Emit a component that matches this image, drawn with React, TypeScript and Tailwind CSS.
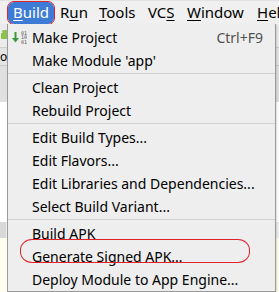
import React from "react";

const Row = ({ children, shortcut }: { children: React.ReactNode; shortcut?: string }) => (
  <div className="flex h-[23px] items-center pl-[24px] pr-[12px] text-[14px] text-black">
    <span className="flex-1 whitespace-nowrap">{children}</span>
    {shortcut && <span className="text-[#505050]">{shortcut}</span>}
  </div>
);

const Sep = () => (
  <div className="flex h-[4px] flex-col justify-start pt-[1px]">
    <div className="h-px bg-[#d2d2d2]" />
  </div>
);

export default function App() {
  return (
    <div
      className="relative h-[292px] w-[279px] overflow-hidden bg-[#f0f0f0]"
      style={{ fontFamily: '"Noto Sans", "Open Sans", sans-serif' }}
    >
      {/* menu bar */}
      <div className="flex h-[24px] items-center border-t border-[#e2e2e2] bg-[#f0f0f0] text-[15px] text-black">
        <div className="relative ml-[8px] flex h-[22px] w-[46px] shrink-0 items-center justify-center rounded-[6px] bg-[#3e7bd6] text-white">
          <span>
            <span className="underline underline-offset-2">B</span>uild
          </span>
          <div className="absolute -inset-[1px] rounded-[7px] border border-[#e0232a]" />
        </div>
        <span className="ml-[6px] w-[39px] shrink-0">
          R<span className="underline underline-offset-2">u</span>n
        </span>
        <span className="w-[49px] shrink-0">
          <span className="underline underline-offset-2">T</span>ools
        </span>
        <span className="w-[39px] shrink-0">
          VC<span className="underline underline-offset-2">S</span>
        </span>
        <span className="w-[70px] shrink-0">
          <span className="underline underline-offset-2">W</span>indow
        </span>
        <span className="shrink-0 whitespace-nowrap">
          <span className="underline underline-offset-2">H</span>elp
        </span>
      </div>

      {/* background app (partially visible) */}
      <div className="flex h-[268px] flex-col">
        <div className="flex h-[24px] items-center border-b border-[#d0d0d0] bg-[#ececec] pl-[1px]">
          <svg width="8" height="12" viewBox="0 0 8 12">
            <rect x="0" y="3" width="8" height="6" rx="1" fill="#8bc34a" />
            <rect x="1" y="0" width="6" height="3" rx="1.5" fill="#8bc34a" />
          </svg>
        </div>
        <div className="h-[18px] border-b border-[#c8c8c8] bg-[#e4e4e4] text-[12px] leading-[18px]">oı</div>
        <div className="h-[36px] bg-[#e0e0e0]" />
        <div className="h-[120px] bg-white" />
        <div className="h-[16px] w-[6px] bg-[#d8d8d8]" />
        <div className="flex-1 bg-[#fffdeb]" />
      </div>

      {/* dropdown menu */}
      <div className="absolute left-[7px] top-[24px] w-[269px] border border-t-0 border-[#9a9a9a] bg-[#eeeeee] pt-[2px] shadow-[1px_1px_2px_rgba(0,0,0,0.15)]">
        <div className="relative">
          <div className="absolute left-[4px] top-[5px] flex items-start gap-[2px]">
            <svg width="7" height="11" viewBox="0 0 7 11" className="mt-[1px]">
              <rect x="2.5" y="0" width="2" height="7" fill="#3a9a3a" />
              <path d="M0 6 L7 6 L3.5 10.5 Z" fill="#3a9a3a" />
            </svg>
            <span
              className="block whitespace-pre text-[5px] leading-[4.3px] text-[#555]"
              style={{ fontFamily: '"DejaVu Sans Mono", monospace' }}
            >
              {"01\n10\n01"}
            </span>
          </div>
          <Row shortcut="Ctrl+F9">Make Project</Row>
        </div>
        <Row>Make Module 'app'</Row>
        <Sep />
        <Row>Clean Project</Row>
        <Row>Rebuild Project</Row>
        <Sep />
        <Row>Edit Build Types...</Row>
        <Row>Edit Flavors...</Row>
        <Row>Edit Libraries and Dependencies...</Row>
        <Row>Select Build Variant...</Row>
        <Sep />
        <Row>Build APK</Row>
        <div className="relative">
          <Row>Generate Signed APK...</Row>
          <div className="absolute left-[12px] top-[-6px] h-[24px] w-[230px] rounded-[12px/11px] border border-[#e0232a]" />
        </div>
        <Row>Deploy Module to App Engine...</Row>
      </div>
    </div>
  );
}
